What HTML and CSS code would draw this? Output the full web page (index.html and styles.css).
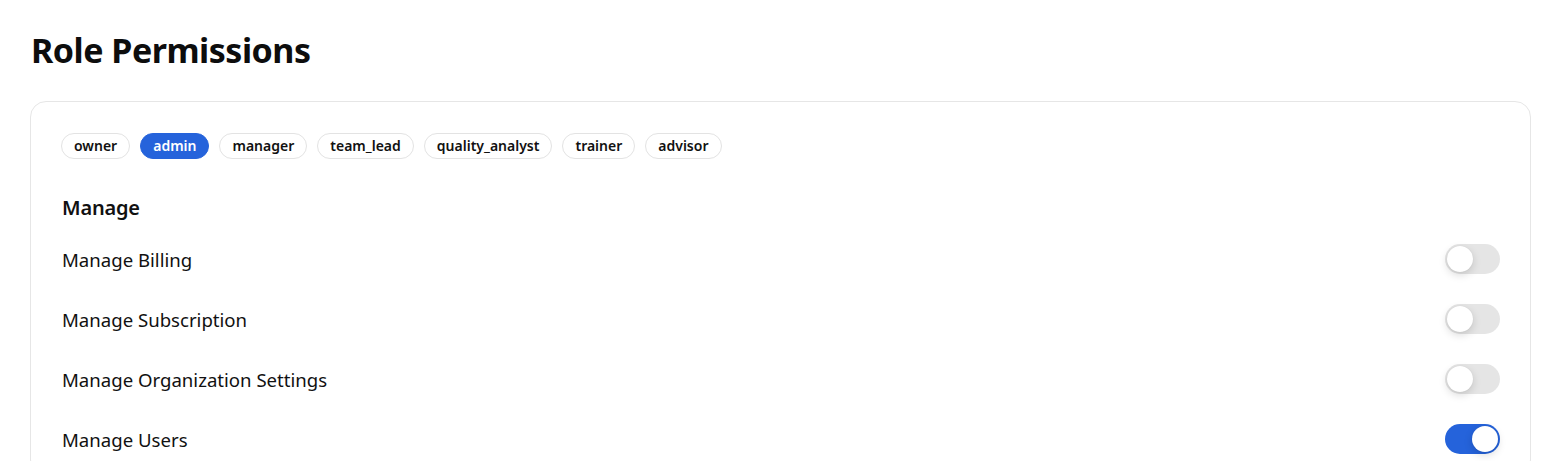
FILE: index.html
```html
<!DOCTYPE html>
<html>
<head>
<meta charset="utf-8">
<link rel="stylesheet" href="styles.css">
</head>
<body>
<div class="page">
  <h1 class="title">Role Permissions</h1>
  <div class="card">
    <div class="chips">
      <span class="chip">owner</span>
      <span class="chip active">admin</span>
      <span class="chip">manager</span>
      <span class="chip">team_lead</span>
      <span class="chip">quality_analyst</span>
      <span class="chip">trainer</span>
      <span class="chip">advisor</span>
    </div>
    <h2 class="section">Manage</h2>
    <div class="rows">
      <div class="row"><span class="label">Manage Billing</span><span class="toggle"><span class="knob"></span></span></div>
      <div class="row"><span class="label">Manage Subscription</span><span class="toggle"><span class="knob"></span></span></div>
      <div class="row"><span class="label">Manage Organization Settings</span><span class="toggle"><span class="knob"></span></span></div>
      <div class="row"><span class="label">Manage Users</span><span class="toggle on"><span class="knob"></span></span></div>
    </div>
  </div>
</div>
</body>
</html>
```
FILE: styles.css
```css
* { box-sizing: border-box; }
html, body { margin: 0; padding: 0; background: #fff; }
body {
  font-family: "Noto Sans", "Open Sans", sans-serif;
  color: #111;
}
.page {
  padding: 26px 17px 0 30px;
}
.title {
  margin: 0 0 0 1px;
  font-size: 34px;
  font-weight: 700;
  line-height: 48px;
  letter-spacing: -0.5px;
  color: #0d0d0d;
}
.card {
  margin-top: 27px;
  border: 1px solid #e6e6e6;
  border-radius: 16px;
  padding: 31px 30px 6px 30px;
}
.chips {
  display: flex;
  gap: 10px;
}
.chip {
  height: 26px;
  padding: 0 12px;
  border: 1px solid #e3e3e3;
  border-radius: 13px;
  font-size: 14px;
  font-weight: 600;
  line-height: 24px;
  color: #111;
  background: #fff;
}
.chip.active {
  background: #2563db;
  border-color: #2563db;
  color: #fff;
}
.section {
  margin: 34px 0 0 1px;
  font-size: 20px;
  font-weight: 600;
  line-height: 30px;
  letter-spacing: -0.2px;
}
.rows {
  margin-top: 6px;
}
.row {
  display: flex;
  align-items: center;
  justify-content: space-between;
  height: 60px;
}
.label {
  font-size: 18.6px;
  margin-left: 1px;
  color: #111;
}
.toggle {
  width: 55px;
  height: 30px;
  border-radius: 15px;
  background: #e5e5e5;
  display: flex;
  align-items: center;
  padding: 0 2px;
}
.knob {
  width: 26px;
  height: 26px;
  border-radius: 50%;
  background: #fff;
  box-shadow: 0 3px 8px rgba(0,0,0,0.15), 0 0 1px rgba(0,0,0,0.1);
}
.toggle.on {
  background: #2563db;
  justify-content: flex-end;
}
```
